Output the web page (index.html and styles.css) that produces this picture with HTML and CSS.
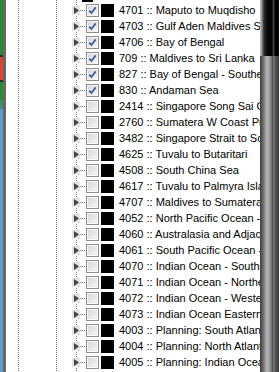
FILE: index.html
```html
<!DOCTYPE html>
<html lang="en">
<head>
    <meta charset="UTF-8">
    <title>Route Layers</title>
    <link rel="stylesheet" href="styles.css">
</head>
<body>
    <div class="window">
        <div class="edge">
            <div class="edge-color"></div>
            <div class="edge-shade"></div>
        </div>
        <div class="tree">
            <div class="rows">
                <div class="row parent"><span class="swatch"></span></div>

                <div class="row"><span class="expander"><svg width="8" height="9" viewBox="0 0 8 9"><path d="M2 1 L7 4.5 L2 8 Z" fill="#454545"/></svg></span><span class="stub"></span><span class="check on"><svg width="11" height="11" viewBox="0 0 11 11"><path d="M2.2 5.6 L4.4 7.9 L8.8 2.4" fill="none" stroke="#4259a6" stroke-width="1.7"/></svg></span><span class="swatch"></span><span class="label">4701 :: Maputo to Muqdisho</span></div>
                <div class="row"><span class="expander"><svg width="8" height="9" viewBox="0 0 8 9"><path d="M2 1 L7 4.5 L2 8 Z" fill="#454545"/></svg></span><span class="stub"></span><span class="check on"><svg width="11" height="11" viewBox="0 0 11 11"><path d="M2.2 5.6 L4.4 7.9 L8.8 2.4" fill="none" stroke="#4259a6" stroke-width="1.7"/></svg></span><span class="swatch"></span><span class="label">4703 :: Gulf Aden Maldives Sea</span></div>
                <div class="row"><span class="expander"><svg width="8" height="9" viewBox="0 0 8 9"><path d="M2 1 L7 4.5 L2 8 Z" fill="#454545"/></svg></span><span class="stub"></span><span class="check on"><svg width="11" height="11" viewBox="0 0 11 11"><path d="M2.2 5.6 L4.4 7.9 L8.8 2.4" fill="none" stroke="#4259a6" stroke-width="1.7"/></svg></span><span class="swatch"></span><span class="label">4706 :: Bay of Bengal</span></div>
                <div class="row"><span class="expander"><svg width="8" height="9" viewBox="0 0 8 9"><path d="M2 1 L7 4.5 L2 8 Z" fill="#454545"/></svg></span><span class="stub"></span><span class="check on"><svg width="11" height="11" viewBox="0 0 11 11"><path d="M2.2 5.6 L4.4 7.9 L8.8 2.4" fill="none" stroke="#4259a6" stroke-width="1.7"/></svg></span><span class="swatch"></span><span class="label">709 :: Maldives to Sri Lanka</span></div>
                <div class="row"><span class="expander"><svg width="8" height="9" viewBox="0 0 8 9"><path d="M2 1 L7 4.5 L2 8 Z" fill="#454545"/></svg></span><span class="stub"></span><span class="check on"><svg width="11" height="11" viewBox="0 0 11 11"><path d="M2.2 5.6 L4.4 7.9 L8.8 2.4" fill="none" stroke="#4259a6" stroke-width="1.7"/></svg></span><span class="swatch"></span><span class="label">827 :: Bay of Bengal - Southern</span></div>
                <div class="row"><span class="expander"><svg width="8" height="9" viewBox="0 0 8 9"><path d="M2 1 L7 4.5 L2 8 Z" fill="#454545"/></svg></span><span class="stub"></span><span class="check on"><svg width="11" height="11" viewBox="0 0 11 11"><path d="M2.2 5.6 L4.4 7.9 L8.8 2.4" fill="none" stroke="#4259a6" stroke-width="1.7"/></svg></span><span class="swatch"></span><span class="label">830 :: Andaman Sea</span></div>

                <div class="row"><span class="expander"><svg width="8" height="9" viewBox="0 0 8 9"><path d="M2 1 L7 4.5 L2 8 Z" fill="#454545"/></svg></span><span class="stub"></span><span class="check"></span><span class="swatch"></span><span class="label">2414 :: Singapore Song Sai Gon</span></div>
                <div class="row"><span class="expander"><svg width="8" height="9" viewBox="0 0 8 9"><path d="M2 1 L7 4.5 L2 8 Z" fill="#454545"/></svg></span><span class="stub"></span><span class="check"></span><span class="swatch"></span><span class="label">2760 :: Sumatera W Coast Pulau</span></div>
                <div class="row"><span class="expander"><svg width="8" height="9" viewBox="0 0 8 9"><path d="M2 1 L7 4.5 L2 8 Z" fill="#454545"/></svg></span><span class="stub"></span><span class="check"></span><span class="swatch"></span><span class="label">3482 :: Singapore Strait to South</span></div>
                <div class="row"><span class="expander"><svg width="8" height="9" viewBox="0 0 8 9"><path d="M2 1 L7 4.5 L2 8 Z" fill="#454545"/></svg></span><span class="stub"></span><span class="check"></span><span class="swatch"></span><span class="label">4625 :: Tuvalu to Butaritari</span></div>
                <div class="row"><span class="expander"><svg width="8" height="9" viewBox="0 0 8 9"><path d="M2 1 L7 4.5 L2 8 Z" fill="#454545"/></svg></span><span class="stub"></span><span class="check"></span><span class="swatch"></span><span class="label">4508 :: South China Sea</span></div>
                <div class="row"><span class="expander"><svg width="8" height="9" viewBox="0 0 8 9"><path d="M2 1 L7 4.5 L2 8 Z" fill="#454545"/></svg></span><span class="stub"></span><span class="check"></span><span class="swatch"></span><span class="label">4617 :: Tuvalu to Palmyra Island</span></div>
                <div class="row"><span class="expander"><svg width="8" height="9" viewBox="0 0 8 9"><path d="M2 1 L7 4.5 L2 8 Z" fill="#454545"/></svg></span><span class="stub"></span><span class="check"></span><span class="swatch"></span><span class="label">4707 :: Maldives to Sumatera</span></div>
                <div class="row"><span class="expander"><svg width="8" height="9" viewBox="0 0 8 9"><path d="M2 1 L7 4.5 L2 8 Z" fill="#454545"/></svg></span><span class="stub"></span><span class="check"></span><span class="swatch"></span><span class="label">4052 :: North Pacific Ocean - East</span></div>
                <div class="row"><span class="expander"><svg width="8" height="9" viewBox="0 0 8 9"><path d="M2 1 L7 4.5 L2 8 Z" fill="#454545"/></svg></span><span class="stub"></span><span class="check"></span><span class="swatch"></span><span class="label">4060 :: Australasia and Adjacent</span></div>
                <div class="row"><span class="expander"><svg width="8" height="9" viewBox="0 0 8 9"><path d="M2 1 L7 4.5 L2 8 Z" fill="#454545"/></svg></span><span class="stub"></span><span class="check"></span><span class="swatch"></span><span class="label">4061 :: South Pacific Ocean - West</span></div>
                <div class="row"><span class="expander"><svg width="8" height="9" viewBox="0 0 8 9"><path d="M2 1 L7 4.5 L2 8 Z" fill="#454545"/></svg></span><span class="stub"></span><span class="check"></span><span class="swatch"></span><span class="label">4070 :: Indian Ocean - Southern</span></div>
                <div class="row"><span class="expander"><svg width="8" height="9" viewBox="0 0 8 9"><path d="M2 1 L7 4.5 L2 8 Z" fill="#454545"/></svg></span><span class="stub"></span><span class="check"></span><span class="swatch"></span><span class="label">4071 :: Indian Ocean - Northern</span></div>
                <div class="row"><span class="expander"><svg width="8" height="9" viewBox="0 0 8 9"><path d="M2 1 L7 4.5 L2 8 Z" fill="#454545"/></svg></span><span class="stub"></span><span class="check"></span><span class="swatch"></span><span class="label">4072 :: Indian Ocean - Western</span></div>
                <div class="row"><span class="expander"><svg width="8" height="9" viewBox="0 0 8 9"><path d="M2 1 L7 4.5 L2 8 Z" fill="#454545"/></svg></span><span class="stub"></span><span class="check"></span><span class="swatch"></span><span class="label">4073 :: Indian Ocean Eastern</span></div>
                <div class="row"><span class="expander"><svg width="8" height="9" viewBox="0 0 8 9"><path d="M2 1 L7 4.5 L2 8 Z" fill="#454545"/></svg></span><span class="stub"></span><span class="check"></span><span class="swatch"></span><span class="label">4003 :: Planning: South Atlantic</span></div>
                <div class="row"><span class="expander"><svg width="8" height="9" viewBox="0 0 8 9"><path d="M2 1 L7 4.5 L2 8 Z" fill="#454545"/></svg></span><span class="stub"></span><span class="check"></span><span class="swatch"></span><span class="label">4004 :: Planning: North Atlantic</span></div>
                <div class="row"><span class="expander"><svg width="8" height="9" viewBox="0 0 8 9"><path d="M2 1 L7 4.5 L2 8 Z" fill="#454545"/></svg></span><span class="stub"></span><span class="check"></span><span class="swatch"></span><span class="label">4005 :: Planning: Indian Ocean</span></div>
                <div class="row"><span class="expander"><svg width="8" height="9" viewBox="0 0 8 9"><path d="M2 1 L7 4.5 L2 8 Z" fill="#454545"/></svg></span><span class="stub"></span><span class="check"></span><span class="swatch"></span><span class="label">4006 :: Planning: Pacific Ocean</span></div>
            </div>
        </div>
        <div class="scrollbar">
            <div class="thumb"></div>
            <div class="track"></div>
        </div>
    </div>
</body>
</html>
```

FILE: styles.css
```css
* {
    margin: 0;
    padding: 0;
    box-sizing: border-box;
}
body {
    overflow: hidden;
    background: #ffffff;
    font-family: 'Liberation Sans', Arial, sans-serif;
    font-size: 11px;
    color: #000000;
}
.window {
    display: flex;
    width: 279px;
    height: 372px;
    overflow: hidden;
}
.edge {
    display: flex;
    flex: none;
    width: 6px;
}
.edge-color {
    width: 3px;
    background: linear-gradient(to bottom,
        #238a2f 0, #238a2f 55px, #2b2b2b 55px, #2b2b2b 57px,
        #e2432e 57px, #e2432e 80px, #2b2b2b 80px, #2b2b2b 82px,
        #229030 82px, #229030 100px, #3c8f6a 100px, #3c8f6a 109px,
        #5c9ad0 109px);
}
.edge-shade {
    width: 3px;
    background: #676767;
}
.tree {
    flex: 1;
    min-width: 0;
    overflow: hidden;
    background:
        linear-gradient(#7c7c7c 50%, transparent 50%) 12px 0 / 1px 2px repeat-y,
        linear-gradient(#7c7c7c 50%, transparent 50%) 50px 0 / 1px 2px repeat-y,
        linear-gradient(#7c7c7c 50%, transparent 50%) 70px 0 / 1px 2px repeat-y;
}
.rows {
    margin-top: -14px;
}
.row {
    display: flex;
    align-items: center;
    height: 16px;
    padding-left: 66px;
    white-space: nowrap;
}
.row.parent {
    align-items: flex-start;
    padding-left: 76px;
}
.row.parent .swatch {
    width: 11px;
    margin: 3px 0 0 0;
}
.expander {
    flex: none;
    display: flex;
    width: 8px;
    height: 9px;
    background: #e4e4e4;
}
.stub {
    flex: none;
    width: 6px;
    height: 1px;
    background: linear-gradient(to right, #7c7c7c 50%, transparent 50%) 0 0 / 2px 1px repeat-x;
}
.check {
    flex: none;
    display: flex;
    align-items: center;
    justify-content: center;
    width: 13px;
    height: 13px;
    border: 1px solid #8e8f8f;
    background: linear-gradient(135deg, #d6d6d6, #f8f8f8);
    box-shadow: inset 0 0 0 1px #f6f6f6;
}
.swatch {
    flex: none;
    width: 13px;
    height: 13px;
    margin-left: 2px;
    background: #000000;
}
.label {
    margin-left: 5px;
    line-height: 16px;
}
.scrollbar {
    display: flex;
    flex-direction: column;
    flex: none;
    width: 19px;
}
.thumb {
    height: 56px;
    background: linear-gradient(to right,
        #c4c4c4 0, #8a8a8a 2px, #2a2a2a 4px, #0a0a0a 7px,
        #000000 12px, #3c3c3c 13px, #3c3c3c 14px, #000000 15px);
}
.track {
    flex: 1;
    background: linear-gradient(to right,
        #3e3e3e 0, #6a6a6a 3px, #b6b6b6 7px, #9a9a9a 10px,
        #4a4a4a 13px, #8a8a8a 14px, #555555 15px, #3a3a3a 19px);
}
```
